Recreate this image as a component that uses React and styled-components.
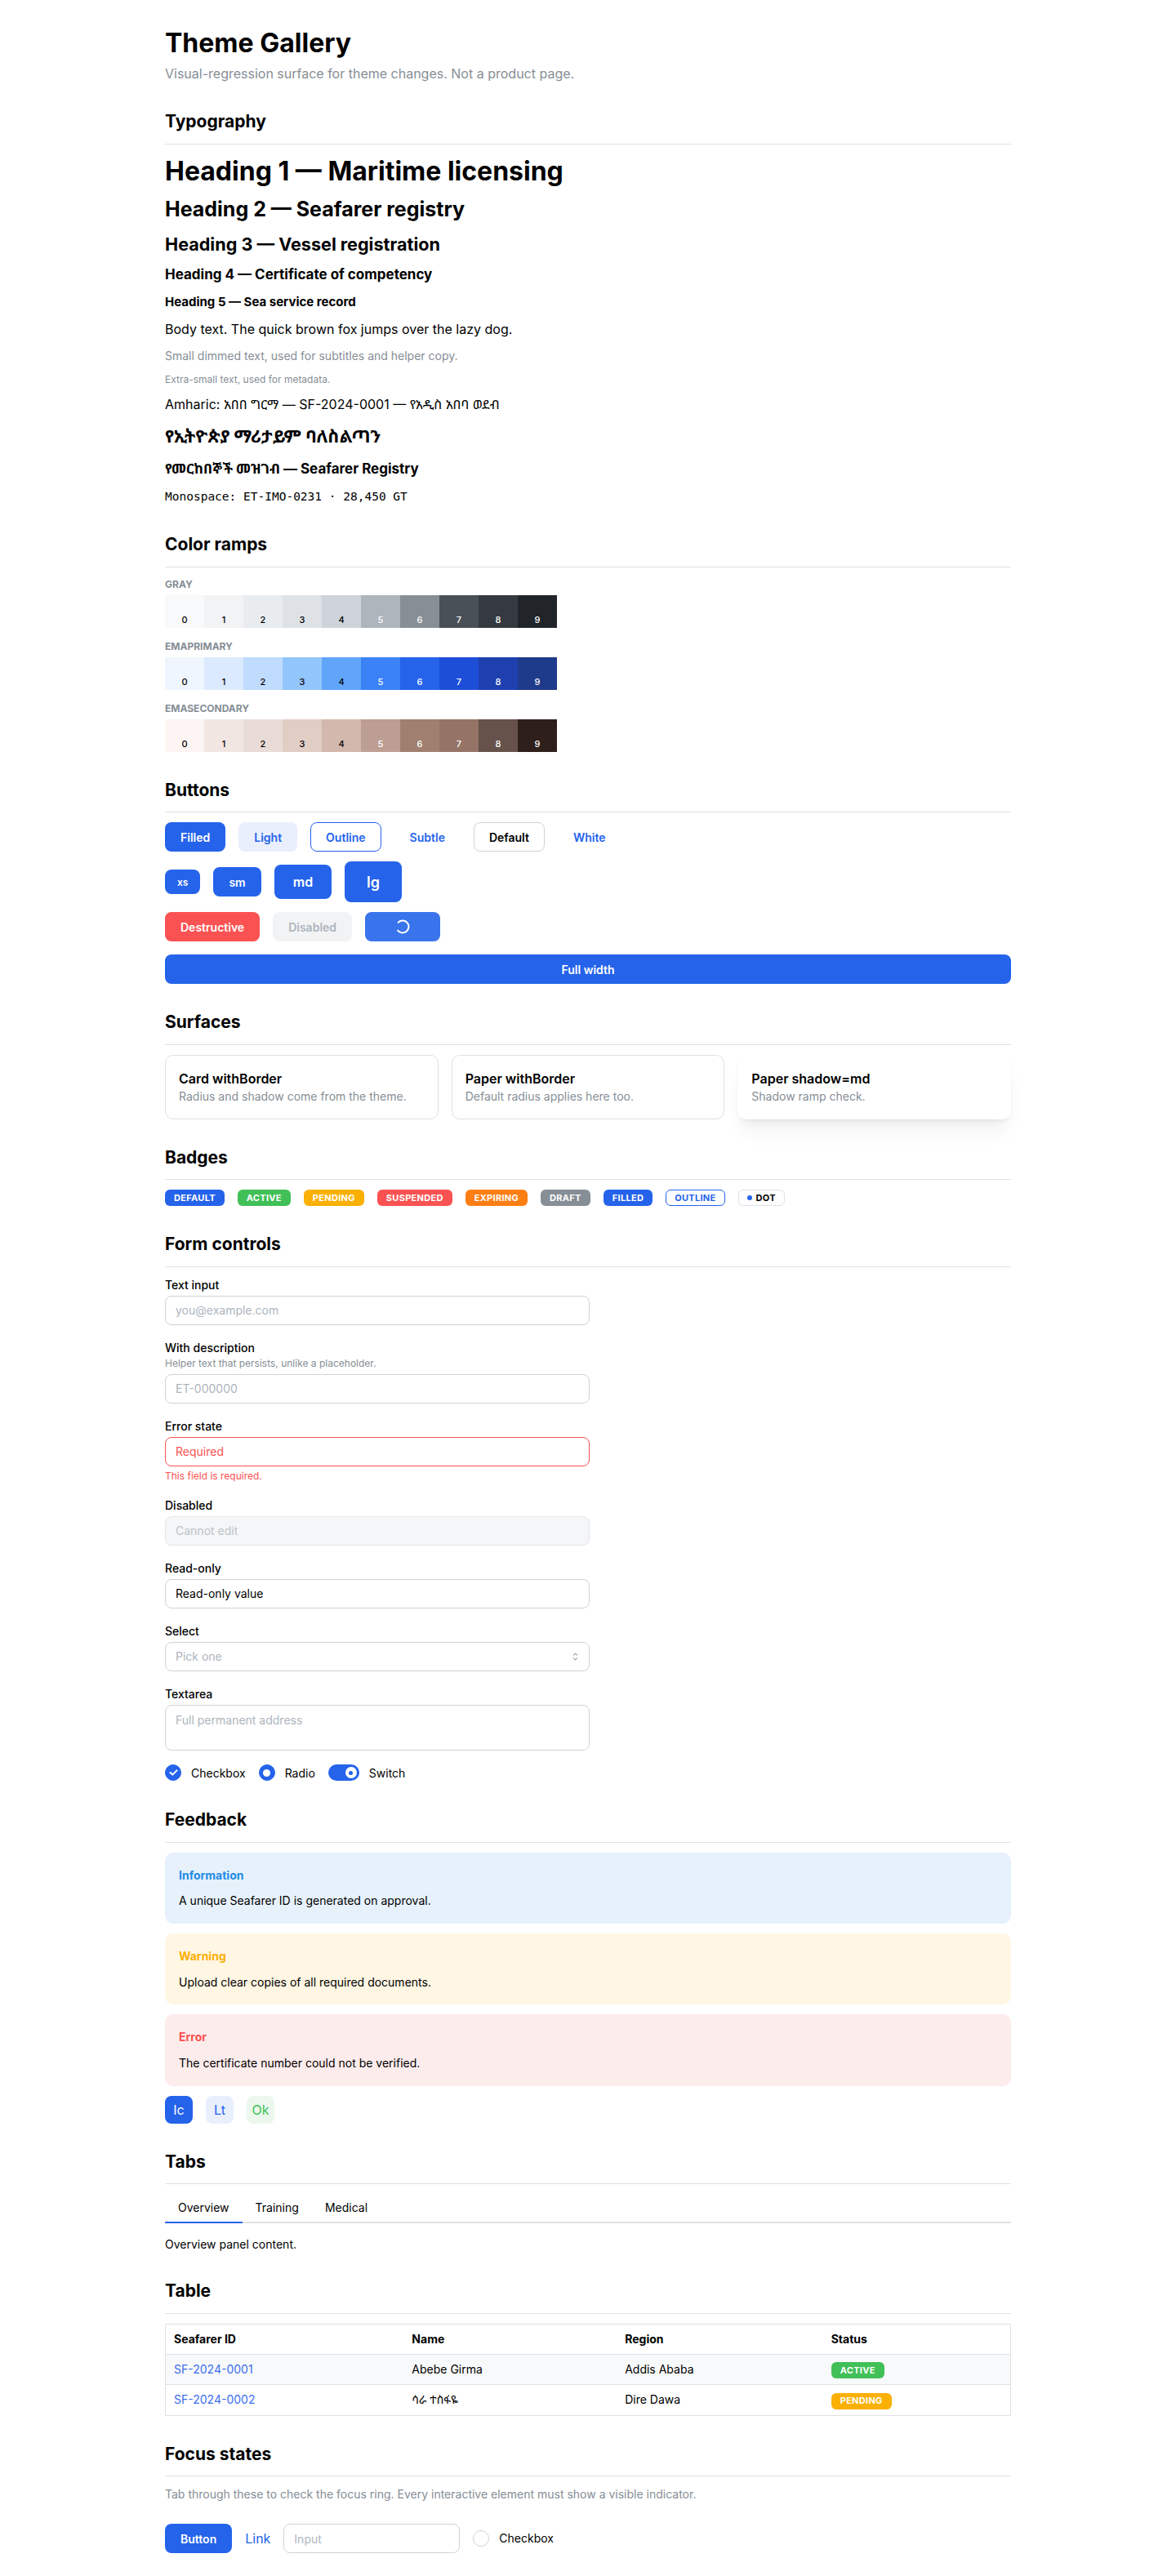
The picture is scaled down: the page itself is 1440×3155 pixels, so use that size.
import React from 'react';
import styled, { createGlobalStyle, css } from 'styled-components';

const GlobalStyle = createGlobalStyle`
  *, *::before, *::after { box-sizing: border-box; }
  body {
    margin: 0;
    background: #fff;
    color: #000;
    font-family: Inter, "Noto Sans Ethiopic", sans-serif;
    font-size: 16px;
    line-height: 1.55;
    -webkit-font-smoothing: antialiased;
  }
`;

const PRIMARY = '#2563eb';
const DIMMED = '#868e96';

const ramps = [
  {
    name: 'gray',
    shades: ['#f8f9fa', '#f1f3f5', '#e9ecef', '#dee2e6', '#ced4da', '#adb5bd', '#868e96', '#495057', '#343a40', '#212529'],
  },
  {
    name: 'emaPrimary',
    shades: ['#eff6ff', '#dbeafe', '#bfdbfe', '#93c5fd', '#60a5fa', '#3b82f6', '#2563eb', '#1d4ed8', '#1e40af', '#1e3a8a'],
  },
  {
    name: 'emaSecondary',
    shades: ['#fcf5f3', '#f2e6e2', '#e9dcd6', '#e0cdc4', '#d3b8ad', '#bd9e92', '#a07f70', '#957366', '#66524b', '#2e1f1b'],
  },
];

const badges = [
  { label: 'Default', bg: PRIMARY },
  { label: 'Active', bg: '#40c057' },
  { label: 'Pending', bg: '#fab005' },
  { label: 'Suspended', bg: '#fa5252' },
  { label: 'Expiring', bg: '#fd7e14' },
  { label: 'Draft', bg: '#868e96' },
  { label: 'Filled', bg: PRIMARY },
];

const alerts = [
  { tone: 'info', title: 'Information', text: 'A unique Seafarer ID is generated on approval.' },
  { tone: 'warning', title: 'Warning', text: 'Upload clear copies of all required documents.' },
  { tone: 'error', title: 'Error', text: 'The certificate number could not be verified.' },
];

const alertTones = {
  info: { bg: '#e7f1fb', fg: '#228be6' },
  warning: { bg: '#fff6e4', fg: '#fab005' },
  error: { bg: '#fdecec', fg: '#fa5252' },
};

const seafarers = [
  { id: 'SF-2024-0001', name: 'Abebe Girma', region: 'Addis Ababa', status: 'Active', color: '#40c057' },
  { id: 'SF-2024-0002', name: 'ሳራ ተስፋዬ', region: 'Dire Dawa', status: 'Pending', color: '#fab005' },
];

/* page frame */

const Page = styled.main`
  max-width: 1100px;
  margin: 0 auto;
  padding: 32px;
`;

const PageTitle = styled.h1`
  margin: 0;
  font-size: 32px;
  line-height: 1.3;
  font-weight: 700;
`;

const Subtitle = styled.p`
  margin: 4px 0 0;
  font-size: 16px;
  color: ${DIMMED};
`;

const SectionWrap = styled.section`
  margin-top: 32px;
`;

const SectionTitle = styled.h2`
  margin: 0;
  font-size: 21px;
  line-height: 1.4;
  font-weight: 700;
`;

const Rule = styled.hr`
  margin: 12px 0 12px;
  border: 0;
  border-top: 1px solid #dee2e6;
`;

const Section = ({ title, children }) => (
  <SectionWrap>
    <SectionTitle>{title}</SectionTitle>
    <Rule />
    {children}
  </SectionWrap>
);

/* typography */

const TypeStack = styled.div`
  display: flex;
  flex-direction: column;
  gap: 10px;
`;

const Heading = styled.h3`
  margin: 0;
  font-weight: 700;
  font-size: ${p => p.$size}px;
  line-height: ${p => p.$lh};
`;

const textLh = { 12: 1.4, 14: 1.45, 16: 1.55 };

const Copy = styled.p`
  margin: 0;
  font-size: ${p => p.$size || 16}px;
  line-height: ${p => textLh[p.$size || 16]};
  color: ${p => (p.$dim ? DIMMED : '#000')};
`;

const Mono = styled.p`
  margin: 0;
  font-family: "DejaVu Sans Mono", "Liberation Mono", monospace;
  font-size: 14.5px;
  line-height: 24px;
`;

/* color ramps */

const RampStack = styled.div`
  display: flex;
  flex-direction: column;
  gap: 14px;
`;

const RampLabel = styled.div`
  font-size: 12px;
  line-height: 18px;
  font-weight: 700;
  text-transform: uppercase;
  color: ${DIMMED};
  margin-bottom: 4px;
`;

const Swatches = styled.div`
  display: flex;
`;

const Swatch = styled.div`
  width: 48px;
  height: 40px;
  display: flex;
  align-items: flex-end;
  justify-content: center;
  padding-bottom: 3px;
  background: ${p => p.$bg};
  color: ${p => (p.$light ? '#fff' : '#000')};
  font-size: 11px;
  line-height: 13px;
  font-weight: 500;
`;

/* buttons */

const ButtonStack = styled.div`
  display: flex;
  flex-direction: column;
  gap: 12px;
`;

const ButtonRow = styled.div`
  display: flex;
  align-items: center;
  gap: 16px;
`;

const sizes = {
  xs: { h: 30, px: 14, fs: 12 },
  sm: { h: 36, px: 18, fs: 14 },
  md: { h: 42, px: 22, fs: 16 },
  lg: { h: 50, px: 26, fs: 18 },
};

const variants = {
  filled: css`background: ${PRIMARY}; color: #fff;`,
  light: css`background: #e9effd; color: ${PRIMARY};`,
  outline: css`background: transparent; color: ${PRIMARY}; border-color: ${PRIMARY};`,
  subtle: css`background: transparent; color: ${PRIMARY};`,
  default: css`background: #fff; color: #000; border-color: #ced4da;`,
  white: css`background: #fff; color: ${PRIMARY};`,
  danger: css`background: #fa5252; color: #fff;`,
  disabled: css`background: #f1f3f5; color: #adb5bd;`,
};

const Button = styled.button`
  position: relative;
  display: inline-flex;
  align-items: center;
  justify-content: center;
  height: ${p => sizes[p.$size || 'sm'].h}px;
  padding: 0 ${p => sizes[p.$size || 'sm'].px}px;
  font-family: inherit;
  font-size: ${p => sizes[p.$size || 'sm'].fs}px;
  font-weight: 600;
  border: 1px solid transparent;
  border-radius: 8px;
  cursor: pointer;
  ${p => variants[p.$variant || 'filled']}
  ${p => p.$full && css`width: 100%; margin-top: 4px;`}
`;

const LoadingButton = styled(Button)`
  background: #3a74ec;
  span { visibility: hidden; }
  svg {
    position: absolute;
    top: 50%;
    left: 50%;
    transform: translate(-50%, -50%);
  }
`;

const Spinner = () => (
  <svg width="20" height="20" viewBox="0 0 20 20">
    <circle cx="10" cy="10" r="7.5" fill="none" stroke="#fff" strokeWidth="2" strokeDasharray="36 12" strokeLinecap="round" transform="rotate(225 10 10)" />
  </svg>
);

/* surfaces */

const SurfaceGrid = styled.div`
  display: grid;
  grid-template-columns: repeat(3, 1fr);
  gap: 16px;
`;

const Surface = styled.div`
  padding: 16px;
  border-radius: 10px;
  background: #fff;
  border: 1px solid ${p => (p.$shadow ? 'transparent' : '#dee2e6')};
  ${p => p.$shadow && css`
    box-shadow: 0 1px 3px rgba(0, 0, 0, 0.05), 0 20px 25px -5px rgba(0, 0, 0, 0.05), 0 10px 10px -5px rgba(0, 0, 0, 0.04);
  `}
`;

const SurfaceTitle = styled.div`
  font-size: 16px;
  font-weight: 600;
`;

const SurfaceText = styled.div`
  font-size: 14px;
  line-height: 1.45;
  color: ${DIMMED};
`;

/* badges */

const BadgeRow = styled.div`
  display: flex;
  align-items: center;
  gap: 16px;
`;

const Badge = styled.span`
  display: inline-flex;
  align-items: center;
  gap: 5px;
  height: 20px;
  padding: 0 10px;
  border-radius: 6px;
  font-size: 11px;
  font-weight: 700;
  letter-spacing: 0.3px;
  text-transform: uppercase;
  background: ${p => p.$bg || '#fff'};
  color: ${p => p.$fg || '#fff'};
  border: 1px solid ${p => p.$bd || 'transparent'};
`;

const BadgeDot = styled.i`
  width: 6px;
  height: 6px;
  border-radius: 50%;
  background: ${PRIMARY};
`;

/* form controls */

const FieldStack = styled.div`
  max-width: 520px;
  display: flex;
  flex-direction: column;
  gap: 18px;
`;

const Field = styled.label`
  display: flex;
  flex-direction: column;
`;

const Label = styled.span`
  font-size: 14px;
  line-height: 20px;
  font-weight: 500;
  margin-bottom: 3px;
`;

const Description = styled.span`
  font-size: 12px;
  line-height: 16px;
  color: ${DIMMED};
  margin: -2px 0 5px;
`;

const ErrorText = styled.span`
  font-size: 12px;
  line-height: 16px;
  color: #fa5252;
  margin-top: 4px;
`;

const fieldBase = css`
  width: 100%;
  font-family: inherit;
  font-size: 14px;
  color: #000;
  background: #fff;
  border: 1px solid #ced4da;
  border-radius: 8px;
  padding: 0 12px;
  outline: none;
  &::placeholder { color: #adb5bd; }
`;

const Input = styled.input`
  ${fieldBase}
  height: 36px;
  ${p => p.$error && css`
    border-color: #fa5252;
    color: #fa5252;
    &::placeholder { color: #fa5252; }
  `}
  &:disabled {
    background: #f5f6f8;
    border-color: #e3e6ea;
    &::placeholder { color: #bcc2c8; }
  }
`;

const SelectBox = styled.div`
  position: relative;
  svg {
    position: absolute;
    right: 10px;
    top: 50%;
    transform: translateY(-50%);
  }
`;

const Textarea = styled.textarea`
  ${fieldBase}
  display: block;
  height: 56px;
  padding: 7px 12px;
  line-height: 1.55;
  resize: none;
`;

const ChoiceRow = styled.div`
  display: flex;
  align-items: center;
  gap: 16px;
  margin-top: -1px;
`;

const Choice = styled.span`
  display: inline-flex;
  align-items: center;
  gap: 12px;
  font-size: 14px;
`;

const Circle = styled.span`
  position: relative;
  width: 20px;
  height: 20px;
  border-radius: 50%;
  display: inline-flex;
  align-items: center;
  justify-content: center;
  background: ${p => (p.$on ? PRIMARY : '#fff')};
  border: 1px solid ${p => (p.$on ? PRIMARY : '#ced4da')};
`;

const RadioDot = styled.i`
  width: 9px;
  height: 9px;
  border-radius: 50%;
  background: #fff;
`;

const SwitchTrack = styled.span`
  width: 38px;
  height: 20px;
  border-radius: 10px;
  background: ${PRIMARY};
  display: inline-flex;
  align-items: center;
  justify-content: flex-end;
  padding-right: 3px;
`;

const SwitchThumb = styled.i`
  width: 14px;
  height: 14px;
  border-radius: 50%;
  background: #fff;
  display: flex;
  align-items: center;
  justify-content: center;
  &::after {
    content: '';
    width: 5px;
    height: 5px;
    border-radius: 50%;
    background: ${PRIMARY};
  }
`;

const Check = () => (
  <svg width="11" height="8" viewBox="0 0 11 8">
    <path d="M1.5 4l2.8 2.6L9.5 1.4" fill="none" stroke="#fff" strokeWidth="2" strokeLinecap="round" strokeLinejoin="round" />
  </svg>
);

const Chevrons = () => (
  <svg width="15" height="15" viewBox="0 0 15 15" fill="#868e96">
    <path d="M4.93 5.43a.45.45 0 0 0 .64.64L7.5 4.14l1.93 1.93a.45.45 0 0 0 .64-.64L7.82 3.18a.45.45 0 0 0-.64 0L4.93 5.43zM10.07 9.57a.45.45 0 0 0-.64-.64L7.5 10.86 5.57 8.93a.45.45 0 0 0-.64.64l2.25 2.25a.45.45 0 0 0 .64 0l2.25-2.25z" />
  </svg>
);

/* feedback */

const AlertStack = styled.div`
  display: flex;
  flex-direction: column;
  gap: 12px;
`;

const Alert = styled.div`
  padding: 16px;
  border: 1px solid transparent;
  border-radius: 10px;
  background: ${p => alertTones[p.$tone].bg};
`;

const AlertTitle = styled.div`
  font-size: 14px;
  font-weight: 700;
  color: ${p => alertTones[p.$tone].fg};
  margin-bottom: 10px;
`;

const AlertText = styled.div`
  font-size: 14px;
`;

const IconRow = styled.div`
  display: flex;
  gap: 16px;
  margin-top: 12px;
`;

const iconTones = {
  filled: css`background: ${PRIMARY}; color: #fff;`,
  light: css`background: #e9effd; color: ${PRIMARY};`,
  green: css`background: #ecf8ee; color: #40c057;`,
};

const ActionIcon = styled.button`
  width: 34px;
  height: 34px;
  border: 0;
  border-radius: 8px;
  font-family: inherit;
  font-size: 16px;
  display: inline-flex;
  align-items: center;
  justify-content: center;
  ${p => iconTones[p.$tone]}
`;

/* tabs */

const TabList = styled.div`
  display: flex;
  border-bottom: 2px solid #dee2e6;
`;

const Tab = styled.button`
  padding: 10px 16px;
  margin-bottom: -2px;
  font-family: inherit;
  font-size: 14px;
  line-height: 1;
  color: #000;
  background: none;
  border: 0;
  border-bottom: 2px solid ${p => (p.$active ? PRIMARY : 'transparent')};
`;

const Panel = styled.p`
  margin: 16px 0 0;
  font-size: 14px;
  line-height: 1.45;
`;

/* table */

const Table = styled.table`
  width: 100%;
  border-collapse: collapse;
  border: 1px solid #dee2e6;
  font-size: 14px;
`;

const Th = styled.th`
  width: ${p => p.$w};
  text-align: left;
  font-weight: 700;
  padding: 7px 10px;
  border-bottom: 1px solid #dee2e6;
`;

const Tr = styled.tr`
  background: ${p => (p.$striped ? '#f8f9fa' : '#fff')};
  border-bottom: 1px solid #dee2e6;
`;

const Td = styled.td`
  padding: 7px 10px;
`;

const IdLink = styled.a`
  color: #3b6ef0;
  text-decoration: none;
`;

/* focus states */

const FocusNote = styled.p`
  margin: 0 0 26px;
  font-size: 14px;
  line-height: 1.45;
  color: ${DIMMED};
`;

const FocusRow = styled.div`
  display: flex;
  align-items: center;
  gap: 16px;
`;

const TextLink = styled.a`
  color: ${PRIMARY};
  font-size: 16px;
  text-decoration: none;
`;

const FocusInput = styled(Input)`
  width: 216px;
`;

export default function App() {
  return (
    <>
      <GlobalStyle />
      <Page>
        <PageTitle>Theme Gallery</PageTitle>
        <Subtitle>Visual-regression surface for theme changes. Not a product page.</Subtitle>

        <Section title="Typography">
          <TypeStack>
            <Heading as="h1" $size={32} $lh={1.3}>Heading 1 — Maritime licensing</Heading>
            <Heading as="h2" $size={25} $lh={1.35}>Heading 2 — Seafarer registry</Heading>
            <Heading as="h3" $size={21.6} $lh={1.4}>Heading 3 — Vessel registration</Heading>
            <Heading as="h4" $size={17} $lh={1.45}>Heading 4 — Certificate of competency</Heading>
            <Heading as="h5" $size={15} $lh={1.5}>Heading 5 — Sea service record</Heading>
            <Copy>Body text. The quick brown fox jumps over the lazy dog.</Copy>
            <Copy $size={14} $dim>Small dimmed text, used for subtitles and helper copy.</Copy>
            <Copy $size={12} $dim>Extra-small text, used for metadata.</Copy>
            <Copy>Amharic: አበበ ግርማ — SF-2024-0001 — የአዲስ አበባ ወደብ</Copy>
            <Heading as="h2" $size={21.6} $lh={1.56}>የኢትዮጵያ ማሪታይም ባለስልጣን</Heading>
            <Heading as="h4" $size={17} $lh={1.45}>የመርከበኞች መዝገብ — Seafarer Registry</Heading>
            <Mono>Monospace: ET-IMO-0231 · 28,450 GT</Mono>
          </TypeStack>
        </Section>

        <Section title="Color ramps">
          <RampStack>
            {ramps.map(r => (
              <div key={r.name}>
                <RampLabel>{r.name}</RampLabel>
                <Swatches>
                  {r.shades.map((c, i) => (
                    <Swatch key={c} $bg={c} $light={i >= 5}>{i}</Swatch>
                  ))}
                </Swatches>
              </div>
            ))}
          </RampStack>
        </Section>

        <Section title="Buttons">
          <ButtonStack>
            <ButtonRow>
              <Button $variant="filled">Filled</Button>
              <Button $variant="light">Light</Button>
              <Button $variant="outline">Outline</Button>
              <Button $variant="subtle">Subtle</Button>
              <Button $variant="default">Default</Button>
              <Button $variant="white">White</Button>
            </ButtonRow>
            <ButtonRow>
              <Button $size="xs">xs</Button>
              <Button $size="sm">sm</Button>
              <Button $size="md">md</Button>
              <Button $size="lg">lg</Button>
            </ButtonRow>
            <ButtonRow>
              <Button $variant="danger">Destructive</Button>
              <Button $variant="disabled" disabled>Disabled</Button>
              <LoadingButton>
                <span>Loading</span>
                <Spinner />
              </LoadingButton>
            </ButtonRow>
            <Button $full>Full width</Button>
          </ButtonStack>
        </Section>

        <Section title="Surfaces">
          <SurfaceGrid>
            <Surface>
              <SurfaceTitle>Card withBorder</SurfaceTitle>
              <SurfaceText>Radius and shadow come from the theme.</SurfaceText>
            </Surface>
            <Surface>
              <SurfaceTitle>Paper withBorder</SurfaceTitle>
              <SurfaceText>Default radius applies here too.</SurfaceText>
            </Surface>
            <Surface $shadow>
              <SurfaceTitle>Paper shadow=md</SurfaceTitle>
              <SurfaceText>Shadow ramp check.</SurfaceText>
            </Surface>
          </SurfaceGrid>
        </Section>

        <Section title="Badges">
          <BadgeRow>
            {badges.map(b => (
              <Badge key={b.label} $bg={b.bg}>{b.label}</Badge>
            ))}
            <Badge $bg="#fff" $fg={PRIMARY} $bd={PRIMARY}>Outline</Badge>
            <Badge $bg="#fff" $fg="#000" $bd="#dee2e6"><BadgeDot />Dot</Badge>
          </BadgeRow>
        </Section>

        <Section title="Form controls">
          <FieldStack>
            <Field>
              <Label>Text input</Label>
              <Input placeholder="you@example.com" />
            </Field>
            <Field>
              <Label>With description</Label>
              <Description>Helper text that persists, unlike a placeholder.</Description>
              <Input placeholder="ET-000000" />
            </Field>
            <Field>
              <Label>Error state</Label>
              <Input $error placeholder="Required" />
              <ErrorText>This field is required.</ErrorText>
            </Field>
            <Field>
              <Label>Disabled</Label>
              <Input disabled placeholder="Cannot edit" />
            </Field>
            <Field>
              <Label>Read-only</Label>
              <Input readOnly value="Read-only value" />
            </Field>
            <Field>
              <Label>Select</Label>
              <SelectBox>
                <Input readOnly placeholder="Pick one" />
                <Chevrons />
              </SelectBox>
            </Field>
            <Field>
              <Label>Textarea</Label>
              <Textarea placeholder="Full permanent address" />
            </Field>
            <ChoiceRow>
              <Choice><Circle $on><Check /></Circle>Checkbox</Choice>
              <Choice><Circle $on><RadioDot /></Circle>Radio</Choice>
              <Choice><SwitchTrack><SwitchThumb /></SwitchTrack>Switch</Choice>
            </ChoiceRow>
          </FieldStack>
        </Section>

        <Section title="Feedback">
          <AlertStack>
            {alerts.map(a => (
              <Alert key={a.tone} $tone={a.tone}>
                <AlertTitle $tone={a.tone}>{a.title}</AlertTitle>
                <AlertText>{a.text}</AlertText>
              </Alert>
            ))}
          </AlertStack>
          <IconRow>
            <ActionIcon $tone="filled">Ic</ActionIcon>
            <ActionIcon $tone="light">Lt</ActionIcon>
            <ActionIcon $tone="green">Ok</ActionIcon>
          </IconRow>
        </Section>

        <Section title="Tabs">
          <TabList>
            <Tab $active>Overview</Tab>
            <Tab>Training</Tab>
            <Tab>Medical</Tab>
          </TabList>
          <Panel>Overview panel content.</Panel>
        </Section>

        <Section title="Table">
          <Table>
            <thead>
              <tr>
                <Th $w="28.2%">Seafarer ID</Th>
                <Th $w="25.2%">Name</Th>
                <Th $w="24.4%">Region</Th>
                <Th>Status</Th>
              </tr>
            </thead>
            <tbody>
              {seafarers.map((s, i) => (
                <Tr key={s.id} $striped={i % 2 === 0}>
                  <Td><IdLink href="#">{s.id}</IdLink></Td>
                  <Td>{s.name}</Td>
                  <Td>{s.region}</Td>
                  <Td><Badge $bg={s.color}>{s.status}</Badge></Td>
                </Tr>
              ))}
            </tbody>
          </Table>
        </Section>

        <Section title="Focus states">
          <FocusNote>Tab through these to check the focus ring. Every interactive element must show a visible indicator.</FocusNote>
          <FocusRow>
            <Button>Button</Button>
            <TextLink href="#">Link</TextLink>
            <FocusInput placeholder="Input" />
            <Choice><Circle />Checkbox</Choice>
          </FocusRow>
        </Section>
      </Page>
    </>
  );
}
